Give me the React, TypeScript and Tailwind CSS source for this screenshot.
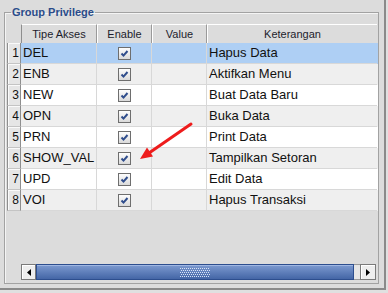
import React from "react";

const rows = [
  { no: 1, kode: "DEL", ket: "Hapus Data" },
  { no: 2, kode: "ENB", ket: "Aktifkan Menu" },
  { no: 3, kode: "NEW", ket: "Buat Data Baru" },
  { no: 4, kode: "OPN", ket: "Buka Data" },
  { no: 5, kode: "PRN", ket: "Print Data" },
  { no: 6, kode: "SHOW_VAL", ket: "Tampilkan Setoran" },
  { no: 7, kode: "UPD", ket: "Edit Data" },
  { no: 8, kode: "VOI", ket: "Hapus Transaksi" },
];

function CheckBox() {
  return (
    <svg width="13" height="13" viewBox="0 0 13 13">
      <defs>
        <linearGradient id="cb" x1="0" y1="0" x2="0" y2="1">
          <stop offset="0" stopColor="#ffffff" />
          <stop offset="1" stopColor="#d8d8d8" />
        </linearGradient>
      </defs>
      <rect x="0.5" y="0.5" width="12" height="12" fill="url(#cb)" stroke="#6e6e6e" />
      <path d="M3.5 6.5 L5.5 8.6 L9.5 4" fill="none" stroke="#2f4d8c" strokeWidth="2" />
    </svg>
  );
}

function Grip() {
  const dots = [];
  for (let j = 0; j < 5; j++) {
    for (let i = 0; i < 15; i++) {
      dots.push(<rect key={`${i}-${j}`} x={i * 2 + (j % 2)} y={j * 2} width="1" height="1" fill="#d9e3f6" />);
    }
  }
  return (
    <svg width="31" height="9" viewBox="0 0 31 9">
      {dots}
    </svg>
  );
}

export default function App() {
  return (
    <div className="relative h-[293px] w-[388px] overflow-hidden bg-[#e0e0e0] font-['Liberation_Sans',Arial,sans-serif]">
      <div className="h-[290px] w-[386px] border-r-2 border-b-2 border-[#8a8a8a] bg-[#dcdcdc] pl-[4px] pt-[6px]">
        <fieldset className="h-[278px] w-[375px] border border-[#a2a2a2] pl-[2px] shadow-[inset_1px_1px_0_#f4f4f4]">
          <legend className="ml-[4px] px-[1px] text-[11px] font-bold leading-[13px] text-[#2b4c8a]">
            Group Privilege
          </legend>

          {/* header */}
          <div className="mt-[5px] flex h-[19px] text-[11px] text-[#1c1c2c]">
            <div className="w-[14px]" />
            <div className="flex w-[76px] items-center justify-center border-t border-l border-r border-t-white border-l-[#8e8e8e] border-r-[#9a9a9a]">
              Tipe Akses
            </div>
            <div className="flex w-[55px] items-center justify-center border-t border-l border-r border-t-white border-l-white border-r-[#9a9a9a]">
              Enable
            </div>
            <div className="flex w-[55px] items-center justify-center border-t border-l border-r border-t-white border-l-white border-r-[#9a9a9a]">
              Value
            </div>
            <div className="flex w-[170px] items-center justify-center border-t border-l border-t-white border-l-white">
              Keterangan
            </div>
          </div>

          {/* rows */}
          {rows.map((r, i) => (
            <div
              key={r.no}
              className={
                "flex h-[21px] text-[13px] text-[#111111] " +
                (i === 0 ? "bg-[#aecff4]" : i % 2 === 1 ? "bg-[#efefef]" : "bg-white")
              }
            >
              <div className="flex w-[14px] items-center justify-end border-l border-r border-b border-l-[#8e8e8e] border-r-[#8e8e8e] border-b-[#c4c4c4] bg-[#e6e6e6] pr-[1px] text-[12px] shadow-[inset_1px_1px_0_#fafafa]">
                {r.no}
              </div>
              <div className="flex w-[76px] items-center border-r border-b border-[#d8d8d8] pl-[2px]">{r.kode}</div>
              <div className="flex w-[55px] items-center justify-center border-r border-b border-[#d8d8d8]">
                <CheckBox />
              </div>
              <div className="w-[55px] border-r border-b border-[#d8d8d8]" />
              <div className="flex w-[170px] items-center border-b border-[#d8d8d8] pl-[2px]">{r.ket}</div>
            </div>
          ))}

          {/* horizontal scrollbar */}
          <div className="mt-[53px] ml-[14px] flex h-[16px] w-[355px]">
            <div className="flex w-[15px] items-center justify-center border border-[#7a7a7a] bg-[#eeeeee] shadow-[inset_1px_1px_0_#ffffff]">
              <svg width="4" height="7" viewBox="0 0 4 7">
                <path d="M4 0 L0 3.5 L4 7 Z" fill="#000" />
              </svg>
            </div>
            <div className="flex w-[318px] items-center justify-center border border-[#2d4e8e] bg-gradient-to-b from-[#7d9ad0] to-[#4466a6] shadow-[inset_0_1px_0_#9fb6e2]">
              <Grip />
            </div>
            <div className="w-[6px] border-y border-[#9a9a9a] bg-[#e6e6e6]" />
            <div className="flex w-[16px] items-center justify-center border border-[#7a7a7a] bg-[#eeeeee] shadow-[inset_1px_1px_0_#ffffff]">
              <svg width="4" height="7" viewBox="0 0 4 7">
                <path d="M0 0 L4 3.5 L0 7 Z" fill="#000" />
              </svg>
            </div>
          </div>
        </fieldset>
      </div>

      {/* red annotation arrow */}
      <svg className="pointer-events-none absolute left-0 top-0" width="388" height="293">
        <line x1="191" y1="124" x2="149" y2="153" stroke="#ee1c1c" strokeWidth="3" strokeLinecap="round" />
        <polygon points="140,159 147,147.5 153,156.5" fill="#ee1c1c" />
      </svg>
    </div>
  );
}
